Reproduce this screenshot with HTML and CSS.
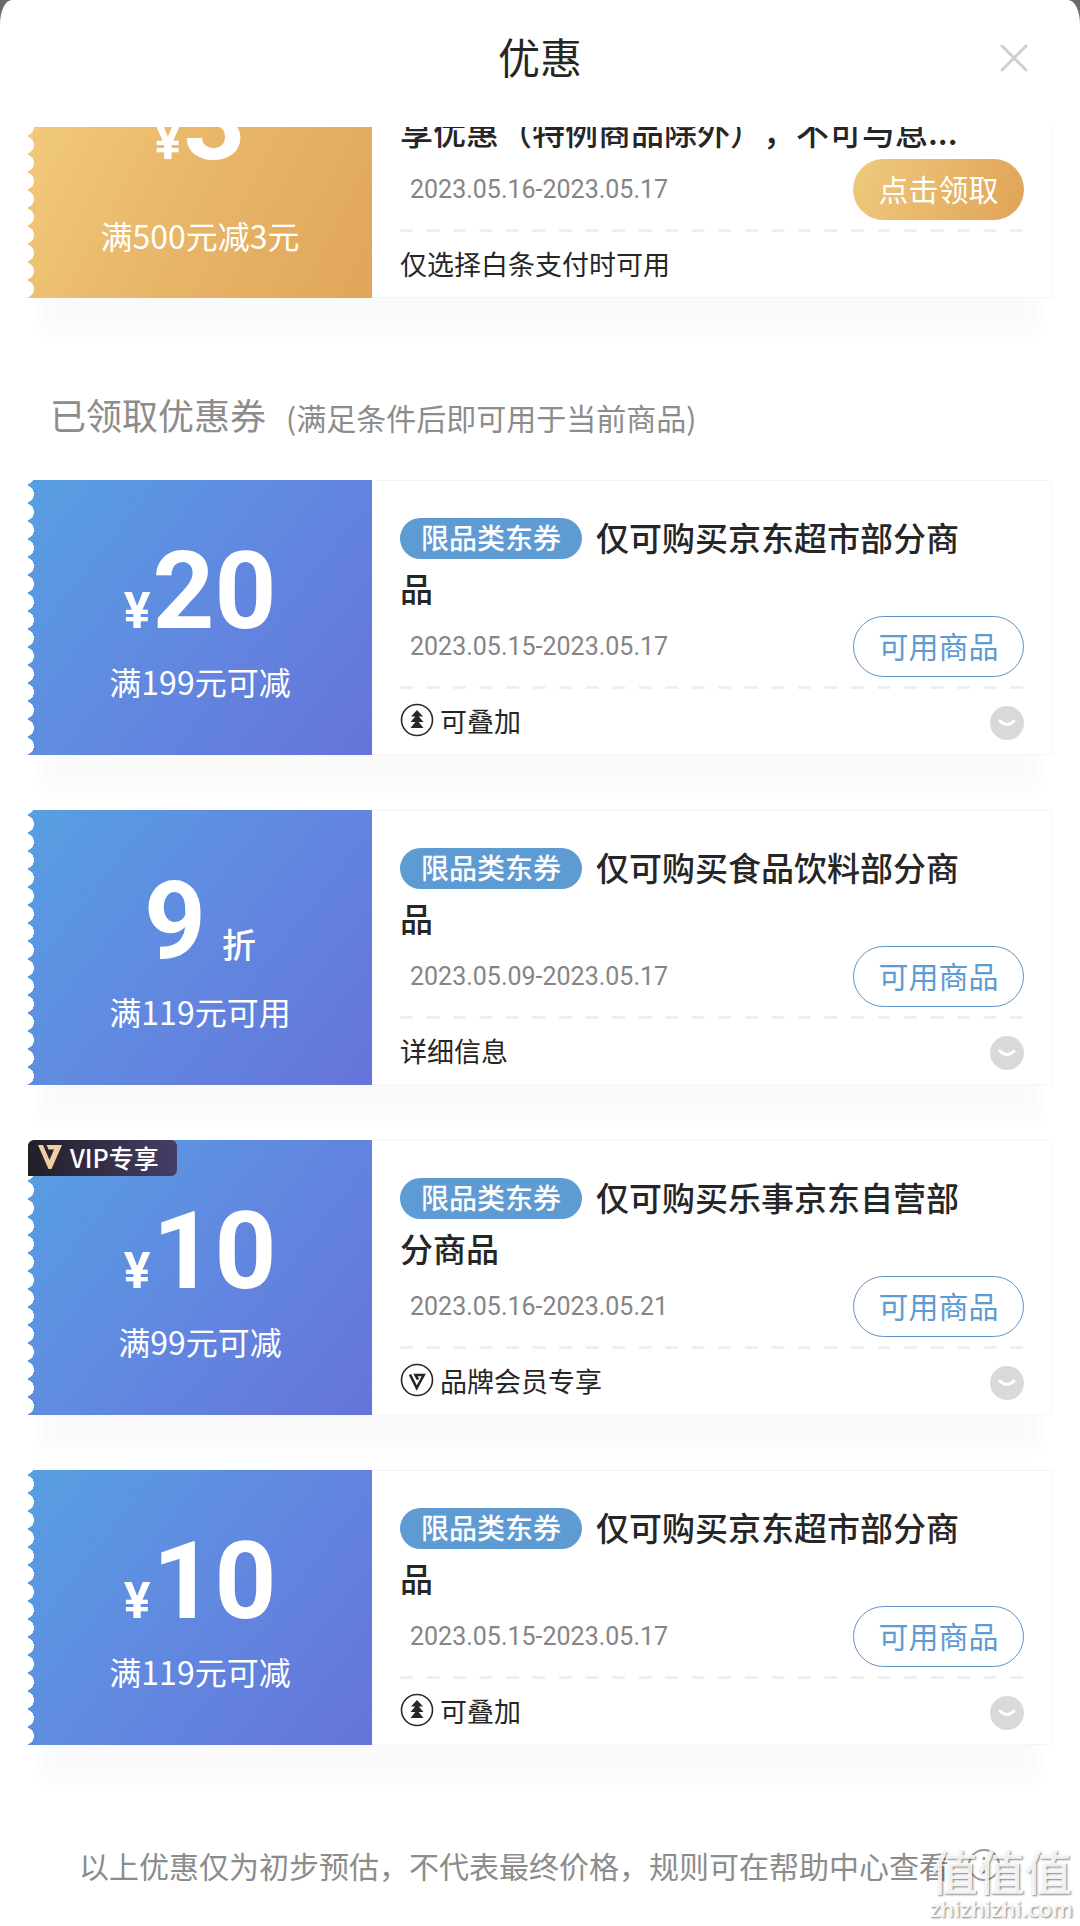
FILE: index.html
```html
<!DOCTYPE html>
<html lang="zh-CN">
<head>
<meta charset="utf-8">
<meta name="viewport" content="width=device-width, initial-scale=1">
<title>优惠</title>
<link rel="stylesheet" href="styles.css">
</head>
<body>
<svg class="sprite" aria-hidden="true">
  <symbol id="icon-stack" viewBox="0 0 34 34">
    <circle cx="17" cy="17" r="15.500" fill="none" stroke="currentColor" stroke-width="1.600"/>
    <path d="M17 7l6 6.500H11zM17 11.500l6.500 7.500h-13zM17 17l6.500 8h-13z" fill="currentColor"/>
  </symbol>
  <symbol id="icon-member" viewBox="0 0 34 34">
    <circle cx="17" cy="17" r="15.500" fill="none" stroke="currentColor" stroke-width="1.600"/>
    <path d="M10 11.500l6.700 13.500 7-13H15.500l2.500 4.500" fill="none" stroke="currentColor" stroke-width="2.600"/>
  </symbol>
  <symbol id="icon-vip" viewBox="0 0 24 24">
    <path d="M0 0h5l6.500 15 4.500-10.500H10.500L8.500 0H24L13.500 24h-3z" fill="#f0cda6"/>
  </symbol>
  <symbol id="icon-more" viewBox="0 0 34 34">
    <circle cx="17" cy="17" r="17" fill="#d9d9d9"/>
    <path d="M10 15q7 7 14 0" fill="none" stroke="#fff" stroke-width="3" stroke-linecap="round"/>
  </symbol>
</svg>

<main class="sheet">
  <header class="sheet-header">
    <h1 class="sheet-title">优惠</h1>
    <button class="close" type="button" aria-label="关闭">
      <svg viewBox="0 0 28 28" width="28" height="28"><path d="M2 2l24 24M26 2L2 26" stroke="#cfcfcf" stroke-width="3" stroke-linecap="round"/></svg>
    </button>
  </header>

  <div class="scroller">
    <article class="coupon coupon-gold coupon-scrolled">
      <div class="face">
        <p class="amount"><span class="currency">¥</span>3</p>
        <p class="condition">满500元减3元</p>
      </div>
      <div class="body">
        <h3 class="title">享优惠（特例商品除外），不可与息...</h3>
        <div class="row"><time class="date">2023.05.16-2023.05.17</time><button class="action" type="button">点击领取</button></div>
        <div class="foot"><span>仅选择白条支付时可用</span></div>
      </div>
    </article>

    <h2 class="section">已领取优惠券<small class="hint">(满足条件后即可用于当前商品)</small></h2>

    <div class="coupons">
      <article class="coupon">
        <div class="face">
          <p class="amount"><span class="currency">¥</span>20</p>
          <p class="condition">满199元可减</p>
        </div>
        <div class="body">
          <h3 class="title"><span class="tag">限品类东券</span>仅可购买京东超市部分商品</h3>
          <div class="row"><time class="date">2023.05.15-2023.05.17</time><button class="action" type="button">可用商品</button></div>
          <div class="foot"><svg class="icon"><use href="#icon-stack"/></svg><span>可叠加</span><button class="more" type="button" aria-label="展开"><svg class="icon"><use href="#icon-more"/></svg></button></div>
        </div>
      </article>

      <article class="coupon">
        <div class="face">
          <p class="amount">9<span class="unit">折</span></p>
          <p class="condition">满119元可用</p>
        </div>
        <div class="body">
          <h3 class="title"><span class="tag">限品类东券</span>仅可购买食品饮料部分商品</h3>
          <div class="row"><time class="date">2023.05.09-2023.05.17</time><button class="action" type="button">可用商品</button></div>
          <div class="foot"><span>详细信息</span><button class="more" type="button" aria-label="展开"><svg class="icon"><use href="#icon-more"/></svg></button></div>
        </div>
      </article>

      <article class="coupon">
        <div class="face">
          <span class="vip"><svg class="vip-icon"><use href="#icon-vip"/></svg>VIP专享</span>
          <p class="amount"><span class="currency">¥</span>10</p>
          <p class="condition">满99元可减</p>
        </div>
        <div class="body">
          <h3 class="title"><span class="tag">限品类东券</span>仅可购买乐事京东自营部分商品</h3>
          <div class="row"><time class="date">2023.05.16-2023.05.21</time><button class="action" type="button">可用商品</button></div>
          <div class="foot"><svg class="icon"><use href="#icon-member"/></svg><span>品牌会员专享</span><button class="more" type="button" aria-label="展开"><svg class="icon"><use href="#icon-more"/></svg></button></div>
        </div>
      </article>

      <article class="coupon">
        <div class="face">
          <p class="amount"><span class="currency">¥</span>10</p>
          <p class="condition">满119元可减</p>
        </div>
        <div class="body">
          <h3 class="title"><span class="tag">限品类东券</span>仅可购买京东超市部分商品</h3>
          <div class="row"><time class="date">2023.05.15-2023.05.17</time><button class="action" type="button">可用商品</button></div>
          <div class="foot"><svg class="icon"><use href="#icon-stack"/></svg><span>可叠加</span><button class="more" type="button" aria-label="展开"><svg class="icon"><use href="#icon-more"/></svg></button></div>
        </div>
      </article>
    </div>

    <footer class="note">
      <span>以上优惠仅为初步预估，不代表最终价格，规则可在帮助中心查看</span>
      <svg class="icon" viewBox="0 0 34 34"><circle cx="17" cy="17" r="15" fill="none" stroke="#999" stroke-width="2"/><path d="M17 15v10M17 9v3" stroke="#999" stroke-width="2.500"/></svg>
    </footer>
  </div>

  <div class="watermark"><span class="watermark-name">值值值</span><span class="watermark-site">zhizhizhi.com</span></div>
</main>
</body>
</html>
```
FILE: styles.css
```css
* {
  box-sizing: border-box;
}

body {
  margin: 0;
  background: #6a6a6a;
  color: #262626;
  font-family: "Noto Sans CJK SC", sans-serif;
  text-spacing-trim: space-all;
}

h1, h2, h3, p {
  margin: 0;
  font-weight: 400;
}

button {
  padding: 0;
  border: 0;
  background: none;
  font-family: inherit;
  cursor: pointer;
}

.sprite {
  display: none;
}

.icon {
  display: block;
  flex: none;
  width: 34px;
  height: 34px;
}

.sheet {
  position: relative;
  min-height: 100vh;
  background: #fff;
  border-radius: 12px 12px 0 0 / 24px 24px 0 0;
}

.sheet-header {
  display: grid;
  grid-template-columns: 1fr auto 1fr;
  align-items: center;
  height: 127px;
  padding: 0 52px 12px;
}

.sheet-title {
  grid-column: 2;
  padding-bottom: 4px;
  font-size: 42px;
  line-height: 60px;
}

.close {
  justify-self: end;
}

.close svg {
  display: block;
}

.scroller {
  overflow: hidden;
  padding: 0 28px 36px;
}

/* Coupon card */
.coupon {
  display: grid;
  grid-template-columns: 344px 1fr;
  min-height: 275px;
  background: #fff;
  box-shadow: 0 50px 12px -12px rgba(0, 0, 0, 0.02);
}

.coupon-scrolled {
  margin-top: -104px;
}

.coupons {
  display: grid;
  gap: 55px;
}

.face {
  position: relative;
  isolation: isolate;
  padding-top: 60px;
  color: #fff;
  text-align: center;
}

/* Perforated left edge */
.face::before {
  content: "";
  position: absolute;
  inset: 0;
  z-index: -1;
  background: linear-gradient(128deg, #579fe2 0%, #6188e0 50%, #6674d9 100%);
  mask: radial-gradient(6px 8px at 0 50%, transparent 94%, #000 100%) 0 5px / 100% 18px;
}

.amount {
  display: flex;
  align-items: baseline;
  justify-content: center;
  height: 104px;
  font-family: Roboto, sans-serif;
  font-size: 108px;
  font-weight: 700;
  line-height: 102px;
}

.currency {
  margin-right: 2px;
  font-size: 50px;
  line-height: 1;
}

.unit {
  margin-left: 16px;
  font-family: "Noto Sans CJK SC", sans-serif;
  font-size: 34px;
  font-weight: 500;
  line-height: 1;
}

.condition {
  margin-top: 16px;
  font-size: 32px;
  line-height: 42px;
}

.vip {
  position: absolute;
  top: 0;
  left: 0;
  display: flex;
  align-items: center;
  gap: 8px;
  height: 36px;
  padding: 0 18px 2px 10px;
  border-radius: 6px 6px 6px 0;
  background: linear-gradient(90deg, #221f27, #463e68);
  font-size: 25px;
  font-weight: 500;
}

.vip-icon {
  width: 24px;
  height: 24px;
}

.body {
  display: flex;
  flex-direction: column;
  justify-content: flex-end;
  padding: 0 27px 0 28px;
  border: 1px solid #f5f5f5;
  border-left: 0;
}

.title {
  margin-right: 40px;
  font-size: 33px;
  font-weight: 500;
  line-height: 51px;
}

.tag {
  display: inline-block;
  margin: 6px 14px 0 0;
  padding: 0 21px 3px;
  border-radius: 21px;
  background: #5e9bd3;
  color: #fff;
  font-size: 28px;
  line-height: 38px;
  vertical-align: top;
}

.row {
  display: flex;
  align-items: center;
  justify-content: space-between;
  margin-top: 2px;
  padding-left: 10px;
}

.date {
  color: #858585;
  font-family: Roboto, sans-serif;
  font-size: 25px;
}

.action {
  width: 171px;
  height: 61px;
  padding-bottom: 3px;
  border: 1px solid #5e93cb;
  border-radius: 31px;
  color: #5e9bd3;
  font-size: 30px;
}

/* Dashed rule along the top, starting and ending on a dash */
.foot {
  display: flex;
  align-items: center;
  gap: 6px;
  height: 68px;
  margin-top: 9px;
  font-size: 27px;
  background: linear-gradient(90deg, #efefef 50%, transparent 50%) 0 0 / calc((100% + 13px) / 24) 3px repeat-x;
}

.more {
  margin: 6px 0 0 auto;
}

.coupon-gold .face {
  padding-top: 48px;
}

.coupon-gold .face::before {
  background: linear-gradient(118deg, #f4cf80 0%, #e9b769 50%, #e0a559 100%);
}

.coupon-gold .condition {
  margin-top: 39px;
}

.coupon-gold .action {
  border: 0;
  background: linear-gradient(110deg, #efca7d, #e0a357);
  color: #fff;
}

.section {
  display: flex;
  align-items: baseline;
  gap: 20px;
  margin: 89px 22px 39px;
  color: #8c8c8c;
  font-size: 36px;
  line-height: 54px;
}

.hint {
  font-size: 30px;
  line-height: 1;
}

.note {
  display: flex;
  align-items: center;
  justify-content: center;
  gap: 18px;
  margin-top: 97px;
  color: #8c8c8c;
  font-size: 30px;
  line-height: 46px;
}

.watermark {
  position: absolute;
  right: 7px;
  bottom: 4px;
  display: grid;
  justify-items: center;
  color: rgba(255, 255, 255, 0.9);
  text-shadow: 1px 1px 2px rgba(0, 0, 0, 0.5);
}

.watermark-name {
  font-size: 47px;
  font-weight: 500;
  line-height: 48px;
}

.watermark-site {
  font-family: "Open Sans", sans-serif;
  font-size: 22px;
  font-weight: 600;
  line-height: 28px;
}
```
